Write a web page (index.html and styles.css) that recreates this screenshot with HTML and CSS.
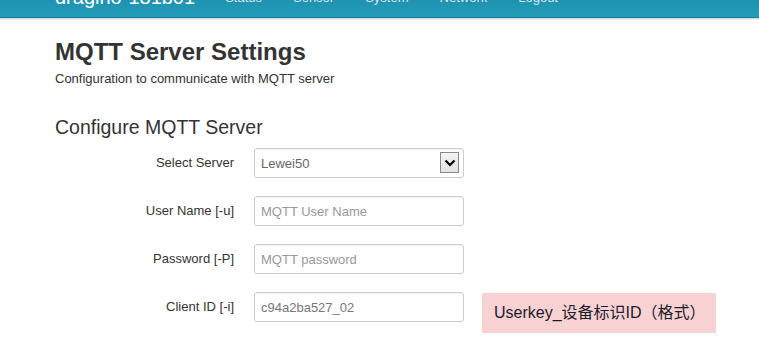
FILE: index.html
```html
<!DOCTYPE html>
<html lang="en">

<head>
    <meta charset="UTF-8">
    <meta name="viewport" content="width=device-width, initial-scale=1.0">
    <title>MQTT Server Settings</title>
    <link rel="stylesheet" href="styles.css">
</head>

<body>
    <div class="navbar">
        <div class="navbar-inner">
            <a class="brand" href="#">dragino-181b01</a>
            <ul class="nav">
                <li><a href="#">Status</a></li>
                <li><a href="#">Sensor</a></li>
                <li><a href="#">System</a></li>
                <li><a href="#">Network</a></li>
                <li><a href="#">Logout</a></li>
            </ul>
        </div>
    </div>

    <div class="container">
        <h2>MQTT Server Settings</h2>
        <p class="subtitle">Configuration to communicate with MQTT server</p>

        <h3>Configure MQTT Server</h3>

        <form class="form-horizontal">
            <div class="control-group">
                <label for="server">Select Server</label>
                <div class="select-wrap">
                    <select id="server">
                        <option>Lewei50</option>
                    </select>
                    <span class="select-arrow">
                        <svg width="12" height="8" viewBox="0 0 12 8">
                            <path d="M1.5 1.5 L6 6 L10.5 1.5" fill="none" stroke="#000" stroke-width="2.2"/>
                        </svg>
                    </span>
                </div>
            </div>
            <div class="control-group">
                <label for="user">User Name [-u]</label>
                <input type="text" id="user" placeholder="MQTT User Name">
            </div>
            <div class="control-group">
                <label for="pass">Password [-P]</label>
                <input type="text" id="pass" placeholder="MQTT password">
            </div>
            <div class="control-group">
                <label for="client">Client ID [-i]</label>
                <input type="text" id="client" class="muted" value="c94a2ba527_02">
                <div class="note">Userkey_设备标识ID（格式）</div>
            </div>
        </form>
    </div>
</body>

</html>
```

FILE: styles.css
```css
body {
    margin: 0;
    font-family: "Liberation Sans", Arial, sans-serif;
    font-size: 13px;
    color: #333;
    background: #fff;
    overflow: hidden;
}

.navbar {
    height: 40px;
    margin-top: -23px;
    background: linear-gradient(#1a84a1, #239dbb);
    border-bottom: 1px solid #1b7f9a;
    box-shadow: 0 1px 0 #d8d8d2, 0 2px 0 #ecece8;
}

.navbar-inner {
    display: flex;
    align-items: center;
    height: 40px;
    padding-left: 55px;
}

.brand {
    font-size: 20px;
    font-weight: normal;
    color: #fff;
    text-decoration: none;
    margin-right: 30px;
}

.nav {
    display: flex;
    list-style: none;
    margin: 0;
    padding: 0;
}

.nav li a {
    display: block;
    color: #d6e6ea;
    font-size: 13px;
    text-decoration: none;
    margin-right: 31px;
}

.container {
    padding-left: 55px;
}

h2 {
    font-size: 24px;
    font-weight: bold;
    margin: 20px 0 0;
    line-height: 28px;
}

.subtitle {
    font-size: 13px;
    margin: 5px 0 0;
    line-height: 16px;
}

h3 {
    font-size: 19.5px;
    font-weight: normal;
    margin: 28px 0 0;
    line-height: 24px;
}

.form-horizontal {
    margin-top: 9px;
}

.control-group {
    display: flex;
    align-items: flex-start;
    margin-bottom: 18px;
}

.control-group label {
    width: 179px;
    text-align: right;
    margin-right: 20px;
    line-height: 30px;
    font-size: 13px;
    color: #333;
}

input,
select {
    box-sizing: border-box;
    width: 210px;
    height: 30px;
    padding: 0 6px;
    font-family: "Liberation Sans", Arial, sans-serif;
    font-size: 13px;
    color: #666;
    border: 1px solid #ccc;
    border-radius: 3px;
    background: #fff;
    box-shadow: inset 0 1px 1px rgba(0, 0, 0, 0.05);
}

input::placeholder {
    color: #999;
}

input.muted {
    color: #777;
}

.select-wrap {
    position: relative;
}

select {
    appearance: none;
    -webkit-appearance: none;
}

.select-arrow {
    position: absolute;
    top: 4px;
    right: 5px;
    width: 17px;
    height: 19px;
    border: 1px solid #8a8a8a;
    background: linear-gradient(#f4f4f4, #e2e2e2);
    display: flex;
    align-items: center;
    justify-content: center;
    pointer-events: none;
}

.note {
    margin-left: 18px;
    margin-top: 1px;
    width: 234px;
    height: 40px;
    box-sizing: border-box;
    padding-left: 12px;
    line-height: 40px;
    background: #f8d2d3;
    color: #1c1c2c;
    font-size: 16px;
    font-family: "Liberation Sans", Arial, "Noto Sans CJK SC", sans-serif;
}
```
